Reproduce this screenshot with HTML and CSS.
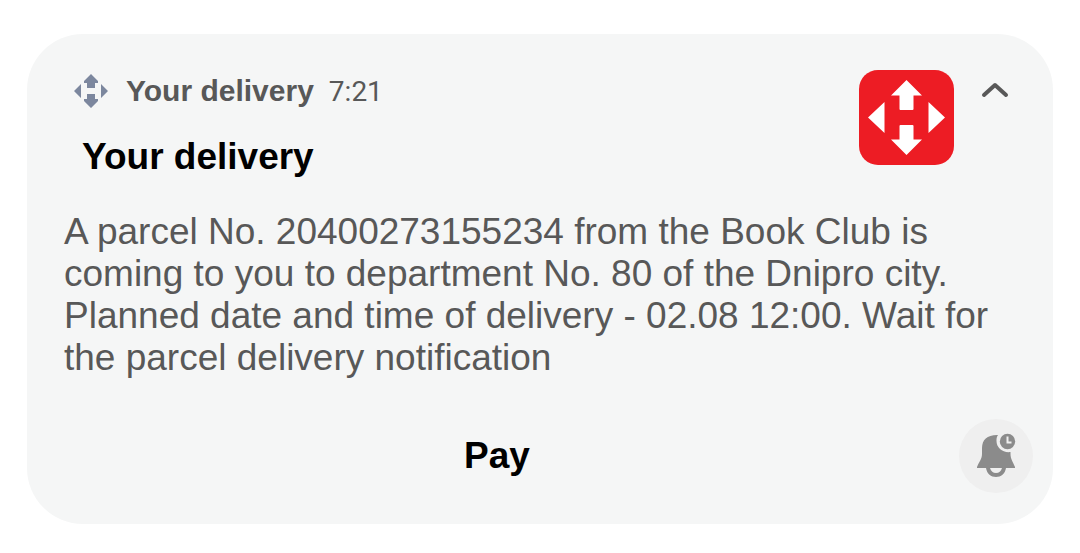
FILE: index.html
```html
<!DOCTYPE html>
<html lang="en">
<head>
<meta charset="utf-8">
<meta name="viewport" content="width=device-width, initial-scale=1">
<title>Your delivery</title>
<link rel="stylesheet" href="styles.css">
</head>
<body>
<article class="card">
  <header class="card-header">
    <div class="heading">
      <div class="source">
        <svg class="source-icon" viewBox="0 0 34 34" aria-hidden="true">
          <path d="M17 0L24 7V9H21V14H13V9H10V7ZM17 34L24 27V25H21V20H13V25H10V27ZM0 17L7 10V24ZM34 17L27 10V24Z"/>
        </svg>
        <span class="source-name">Your delivery</span>
        <time class="time" datetime="07:21">7:21</time>
      </div>
      <h1 class="title">Your delivery</h1>
    </div>
    <svg class="app-icon" viewBox="0 0 95 95" role="img" aria-label="Delivery app">
      <rect width="95" height="95" rx="19" fill="#ed1c24"/>
      <path fill="#fff" d="M47.500 10L63 25.500H54.500V39Q54.500 40 53.500 40H41.500Q40.500 40 40.500 39V25.500H32ZM47.500 85L63 69.500H54.500V56Q54.500 55 53.500 55H41.500Q40.500 55 40.500 56V69.500H32ZM9 47.500L25.500 32V63ZM86 47.500L69.500 32V63Z"/>
    </svg>
    <button class="collapse" type="button" aria-label="Collapse">
      <svg class="chevron" viewBox="0 0 28 16" aria-hidden="true">
        <path d="M3 13L14 3L25 13"/>
      </svg>
    </button>
  </header>
  <p class="message">A parcel No. 20400273155234 from the Book Club is coming to you to department No. 80 of the Dnipro city. Planned date and time of delivery - 02.08 12:00. Wait for the parcel delivery notification</p>
  <footer class="card-footer">
    <button class="pay" type="button">Pay</button>
    <button class="snooze" type="button" aria-label="Snooze notification">
      <svg class="bell" viewBox="0 0 40 46" aria-hidden="true">
        <path fill="#8b8b8b" d="M21 2C11 2 6 7 6 15V21C6 26 3 29 1 34V35H10C11 41 15 44 20 44C25 44 29 41 30 35H39V34C37 29 34.500 26 34.500 21V19C27 20 20.500 15 20.500 8C20.500 6 20.500 4 22 2Z"/>
        <path fill="#efefef" d="M14 35H26C25 38.500 23 40 20 40C17 40 15 38.500 14 35Z"/>
        <circle cx="31.500" cy="8.500" r="7.700" fill="#8b8b8b"/>
        <path d="M31.500 3.500V9.500H35.500" fill="none" stroke="#efefef" stroke-width="2"/>
      </svg>
    </button>
  </footer>
</article>
</body>
</html>
```
FILE: styles.css
```css
body {
  margin: 0;
  padding: 34px 27px;
  background: #fff;
  font-family: "Liberation Sans", Arial, sans-serif;
}

button {
  border: 0;
  padding: 0;
  background: none;
  font: inherit;
}

.card {
  padding: 36px 20px 31px 37px;
  border-radius: 56px;
  background: #f5f6f6;
}

.card-header {
  display: flex;
  align-items: flex-start;
  padding-right: 24px;
}

.heading {
  flex: 1;
  padding-left: 10px;
}

.source {
  display: flex;
  align-items: center;
  height: 42px;
}

.source-icon {
  width: 34px;
  height: 34px;
  margin-right: 18px;
  fill: #7c879e;
}

.source-name {
  margin-right: 15px;
  color: #585858;
  font-size: 30px;
  font-weight: 700;
}

.time {
  color: #585858;
  font-family: Roboto, sans-serif;
  font-size: 28px;
}

.title {
  margin: 24px 0 0;
  padding-left: 8px;
  color: #000;
  font-size: 37px;
  line-height: 42px;
}

.app-icon {
  width: 95px;
  height: 95px;
  margin-right: 27px;
}

.collapse {
  display: flex;
  padding-top: 12px;
}

.chevron {
  width: 28px;
  height: 16px;
  fill: none;
  stroke: #585858;
  stroke-width: 4;
  stroke-linecap: round;
  stroke-linejoin: round;
}

.message {
  margin: 33px 24px 40px 0;
  color: #585858;
  font-size: 37px;
  line-height: 42px;
}

.card-footer {
  display: flex;
  align-items: center;
  gap: 29px;
}

.pay {
  flex: 1;
  color: #000;
  font-size: 37px;
  font-weight: 700;
  line-height: 42px;
}

.snooze {
  display: flex;
  align-items: center;
  justify-content: center;
  width: 74px;
  height: 74px;
  border-radius: 50%;
  background: #efefef;
}

.bell {
  width: 40px;
  height: 46px;
}
```
